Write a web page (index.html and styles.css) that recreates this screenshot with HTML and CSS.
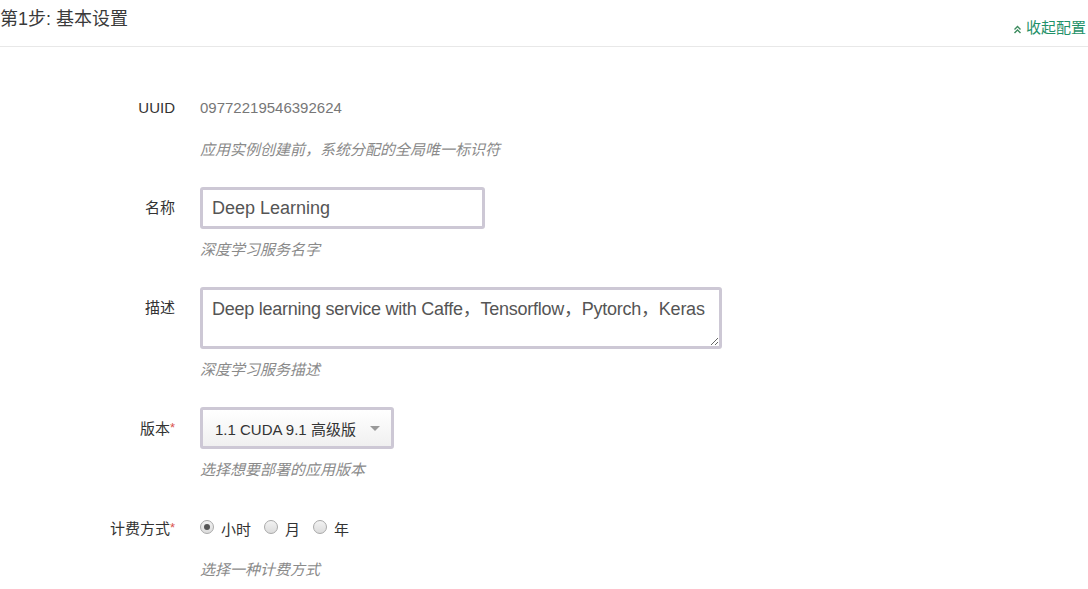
FILE: index.html
```html
<!DOCTYPE html>
<html lang="zh-CN">
<head>
<meta charset="utf-8">
<title>第1步: 基本设置</title>
<link rel="stylesheet" href="styles.css">
</head>
<body>
<div class="page">
  <header class="step-head">
    <h2 class="step-title">第1步: 基本设置</h2>
    <a class="collapse-link" href="#">
      <svg class="chev" width="9" height="9" viewBox="0 0 9 9" aria-hidden="true">
        <polyline points="1.5,4.5 4.5,1.5 7.5,4.5" fill="none" stroke="currentColor" stroke-width="1.4"/>
        <polyline points="1.5,8 4.5,5 7.5,8" fill="none" stroke="currentColor" stroke-width="1.4"/>
      </svg>收起配置</a>
  </header>

  <form class="form">
    <div class="group">
      <label class="label">UUID</label>
      <div class="field">
        <div class="static">09772219546392624</div>
        <div class="help">应用实例创建前，系统分配的全局唯一标识符</div>
      </div>
    </div>

    <div class="group">
      <label class="label">名称</label>
      <div class="field">
        <input class="text-input" type="text" value="Deep Learning">
        <div class="help">深度学习服务名字</div>
      </div>
    </div>

    <div class="group">
      <label class="label">描述</label>
      <div class="field">
        <textarea class="text-area" wrap="off">Deep learning service with Caffe，Tensorflow，Pytorch，Keras</textarea>
        <div class="help">深度学习服务描述</div>
      </div>
    </div>

    <div class="group">
      <label class="label">版本<span class="req">*</span></label>
      <div class="field">
        <div class="select-box">
          <span class="select-text">1.1 CUDA 9.1 高级版</span>
          <span class="caret"></span>
        </div>
        <div class="help">选择想要部署的应用版本</div>
      </div>
    </div>

    <div class="group">
      <label class="label">计费方式<span class="req">*</span></label>
      <div class="field">
        <div class="radios">
          <span class="radio checked"></span><span class="radio-label">小时</span>
          <span class="radio"></span><span class="radio-label">月</span>
          <span class="radio"></span><span class="radio-label">年</span>
        </div>
        <div class="help">选择一种计费方式</div>
      </div>
    </div>
  </form>
</div>
</body>
</html>
```

FILE: styles.css
```css
html, body {
  margin: 0;
  padding: 0;
  background: #ffffff;
}

body {
  font-family: "Liberation Sans", Arial, "Noto Sans CJK SC", sans-serif;
  color: #333333;
  font-size: 15px;
}

.page {
  width: 1088px;
}

.step-head {
  height: 46px;
  border-bottom: 1px solid #e8e8e8;
  display: flex;
  justify-content: space-between;
  align-items: flex-start;
  padding-right: 2px;
}

.step-title {
  margin: 0;
  font-size: 18px;
  font-weight: normal;
  line-height: 39px;
  color: #3a3a3a;
}

.collapse-link {
  align-self: flex-end;
  margin-bottom: 8px;
  display: flex;
  align-items: center;
  gap: 4px;
  font-size: 15px;
  line-height: 20px;
  color: #1f9169;
  text-decoration: none;
}

.chev {
  color: #3a8a5c;
  margin-top: 2px;
}

.form {
  padding-top: 40px;
}

.group {
  display: grid;
  grid-template-columns: 175px 1fr;
  column-gap: 25px;
  margin-bottom: 26px;
}

.label {
  text-align: right;
  line-height: 42px;
  height: 42px;
  font-size: 15px;
  color: #333333;
}

.req {
  color: #d9534f;
  font-size: 13px;
  vertical-align: 2px;
}

.field {
  display: flex;
  flex-direction: column;
  align-items: flex-start;
}

.static {
  line-height: 42px;
  height: 42px;
  color: #777777;
  font-size: 15px;
}

.help {
  margin-top: 10px;
  line-height: 22px;
  font-size: 15px;
  font-style: italic;
  color: #8a8a8a;
}

.text-input {
  box-sizing: border-box;
  width: 285px;
  height: 42px;
  margin: 0;
  border: 3px solid #cdc8d5;
  border-radius: 3px;
  padding: 0 9px;
  font-family: "Liberation Sans", Arial, "Noto Sans CJK SC", sans-serif;
  font-size: 18px;
  color: #555555;
  background: #ffffff;
  outline: none;
}

.text-area {
  box-sizing: border-box;
  width: 522px;
  height: 62px;
  margin: 0;
  border: 3px solid #cdc8d5;
  border-radius: 3px;
  padding: 7px 4px 5px 9px;
  font-family: "Liberation Sans", Arial, "Noto Sans CJK SC", sans-serif;
  font-size: 18px;
  line-height: 24px;
  color: #555555;
  background: #ffffff;
  outline: none;
  display: block;
  white-space: pre;
  overflow: hidden;
  resize: both;
  letter-spacing: -0.25px;
}

.select-box {
  box-sizing: border-box;
  width: 194px;
  height: 42px;
  border: 3px solid #cdc8d5;
  border-radius: 3px;
  background: linear-gradient(#ffffff, #f0f0f0);
  display: flex;
  align-items: center;
  padding: 0 11px 0 12px;
  justify-content: space-between;
}

.select-text {
  font-size: 15px;
  color: #333333;
}

.caret {
  width: 0;
  height: 0;
  border-left: 5px solid transparent;
  border-right: 5px solid transparent;
  border-top: 5px solid #999999;
  margin-top: 1px;
}

.radios {
  height: 42px;
  display: flex;
  align-items: center;
}

.radio {
  box-sizing: border-box;
  width: 14px;
  height: 14px;
  border-radius: 50%;
  border: 1px solid #a9a9a9;
  background: linear-gradient(#f2f2f2, #dcdcdc);
  display: flex;
  align-items: center;
  justify-content: center;
  margin-top: -2px;
}

.radio.checked::after {
  content: "";
  width: 6px;
  height: 6px;
  border-radius: 50%;
  background: #555555;
}

.radio-label {
  margin-left: 7px;
  margin-right: 13px;
  font-size: 15px;
  color: #333333;
}
```
